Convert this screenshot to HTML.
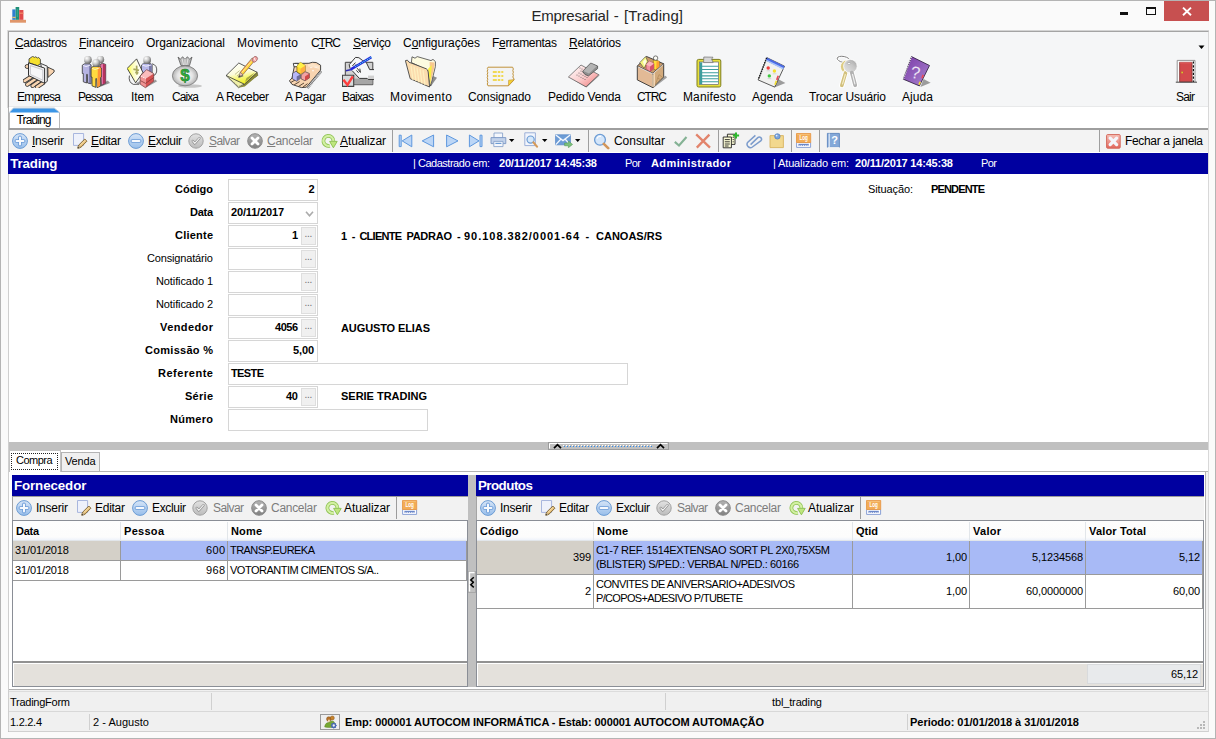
<!DOCTYPE html>
<html lang="pt-BR"><head><meta charset="utf-8"><title>Empresarial - [Trading]</title>
<style>
html,body{margin:0;padding:0}
body{width:1216px;height:739px;position:relative;overflow:hidden;background:#fafafa;font-family:"Liberation Sans",sans-serif;font-size:12px;color:#000}
body div,body span.t,body svg{position:absolute;box-sizing:border-box}
span.t{white-space:pre;display:block}
u{text-decoration:underline;text-underline-offset:0.6px;text-decoration-thickness:1px}

</style></head><body>
<div style="left:0px;top:0px;width:1216px;height:739px;background:#fafafa;border:1px solid #b4b4b4;"></div>
<div style="left:10px;top:7px;width:16px;height:16px;"><svg width="16" height="16" viewBox="0 0 16 16"><rect x="0" y="12.8" width="16" height="2.9" fill="#e0966a"/><rect x="2.3" y="2.4" width="3.3" height="10.4" fill="#2f7fd0"/><rect x="5.6" y="0" width="3.6" height="12.8" fill="#1f8f78"/><rect x="9.2" y="3" width="4.2" height="9.8" fill="#e04a4a"/><rect x="9.2" y="5.6" width="4.2" height="1.2" fill="#f08a6a"/><rect x="2.3" y="9.8" width="3.3" height="1.3" fill="#e8c070"/><rect x="6.8" y="2" width="1" height="8" fill="#3aa890"/></svg></div>
<span class="t " style="top:6.30px;font-size:15px;line-height:19px;color:#262626;letter-spacing:-0.253px;left:531.5px;">Empresarial</span>
<span class="t " style="top:6.30px;font-size:15px;line-height:19px;color:#262626;left:613.8px;">-</span>
<span class="t " style="top:6.30px;font-size:15px;line-height:19px;color:#262626;letter-spacing:0.045px;left:624px;">[Trading]</span>
<div style="left:1164px;top:1px;width:45px;height:20px;background:#c75050;"></div>
<svg style="left:1181px;top:6px" width="12" height="11" viewBox="0 0 12 11"><path d="M2 1.6 L10 9.2 M10 1.6 L2 9.2" stroke="#fff" stroke-width="1.9" fill="none"/></svg>
<div style="left:1146px;top:7px;width:10px;height:8px;border:1px solid #111;border-top-width:2px;"></div>
<div style="left:1120px;top:12px;width:8px;height:3px;background:#111;"></div>
<div style="left:8px;top:31px;width:1201px;height:701px;background:#f0f0f0;border:1px solid #c6c6c6;border-top-color:#a8a8a8;border-left-color:#b0b0b0;border-right-color:#d8d8d8;border-bottom-color:#d0d0d0;"></div>
<div style="left:9px;top:32px;width:1199px;height:75px;background:#f5f6f7;"></div>
<div style="left:8px;top:31px;width:1px;height:76px;background:#a0a0a0;"></div>
<div style="left:7px;top:30px;width:1202px;height:1px;background:#d4d4d4;"></div>
<div style="left:7px;top:30px;width:1px;height:78px;background:#dcdcdc;"></div>
<div style="left:8px;top:31px;width:1200px;height:1px;background:#a4a4a4;"></div>
<span class="t " style="top:34.84px;font-size:12px;line-height:16px;letter-spacing:-0.338px;left:15px;"><u>C</u>adastros</span>
<span class="t " style="top:34.84px;font-size:12px;line-height:16px;letter-spacing:-0.116px;left:79px;"><u>F</u>inanceiro</span>
<span class="t " style="top:34.84px;font-size:12px;line-height:16px;letter-spacing:-0.081px;left:146px;">Organizacional</span>
<span class="t " style="top:34.84px;font-size:12px;line-height:16px;letter-spacing:0.289px;left:237px;">Movimento</span>
<span class="t " style="top:34.84px;font-size:12px;line-height:16px;letter-spacing:-1.120px;left:311px;">C<u>T</u>RC</span>
<span class="t " style="top:34.84px;font-size:12px;line-height:16px;letter-spacing:-0.339px;left:353px;"><u>S</u>erviço</span>
<span class="t " style="top:34.84px;font-size:12px;line-height:16px;letter-spacing:-0.034px;left:403px;">C<u>o</u>nfigurações</span>
<span class="t " style="top:34.84px;font-size:12px;line-height:16px;letter-spacing:-0.306px;left:492px;">F<u>e</u>rramentas</span>
<span class="t " style="top:34.84px;font-size:12px;line-height:16px;letter-spacing:-0.226px;left:569px;"><u>R</u>elatórios</span>
<svg style="left:1198px;top:45px" width="8" height="5"><path d="M0.5 0.5h6l-3 3.5z" fill="#000"/></svg>
<svg width="0" height="0" style="left:0;top:0"><defs>
<radialGradient id="gs" cx="0.35" cy="0.3" r="0.8"><stop offset="0" stop-color="#fff"/><stop offset="0.45" stop-color="#c6c6c6"/><stop offset="1" stop-color="#565656"/></radialGradient>
<radialGradient id="gbag" cx="0.5" cy="0.5" r="0.55"><stop offset="0" stop-color="#fff"/><stop offset="0.55" stop-color="#e4e4e4"/><stop offset="1" stop-color="#a4a4a4"/></radialGradient>
<linearGradient id="gbl" x1="0" y1="0" x2="0" y2="1"><stop offset="0" stop-color="#d6e5f7"/><stop offset="1" stop-color="#98beea"/></linearGradient>
<linearGradient id="ggr" x1="0" y1="0" x2="0" y2="1"><stop offset="0" stop-color="#e2e2e2"/><stop offset="1" stop-color="#bcbcbc"/></linearGradient>
<linearGradient id="gdk" x1="0" y1="0" x2="0" y2="1"><stop offset="0" stop-color="#b4b4b4"/><stop offset="1" stop-color="#808080"/></linearGradient>
<linearGradient id="gpk" x1="0" y1="0" x2="1" y2="1"><stop offset="0" stop-color="#fff"/><stop offset="0.5" stop-color="#fbd0d0"/><stop offset="1" stop-color="#f07878"/></linearGradient>
<linearGradient id="gpu" x1="0" y1="0" x2="1" y2="1"><stop offset="0" stop-color="#7a3aa8"/><stop offset="1" stop-color="#a986cf"/></linearGradient>
<linearGradient id="gye" x1="0" y1="0" x2="1" y2="0"><stop offset="0" stop-color="#ffff30"/><stop offset="0.3" stop-color="#fdfda8"/><stop offset="0.65" stop-color="#fffff0"/><stop offset="1" stop-color="#fffff4"/></linearGradient>
<linearGradient id="gpad" x1="0" y1="0" x2="0.3" y2="1"><stop offset="0" stop-color="#fffffa"/><stop offset="0.55" stop-color="#fcfcdc"/><stop offset="0.8" stop-color="#f6f668"/><stop offset="1" stop-color="#f0f030"/></linearGradient>
<linearGradient id="gred" x1="0" y1="0" x2="0" y2="1"><stop offset="0" stop-color="#f7c4bc"/><stop offset="1" stop-color="#e0665c"/></linearGradient>
<linearGradient id="gkey" x1="0" y1="1" x2="1" y2="0"><stop offset="0" stop-color="#e8e8e8"/><stop offset="0.6" stop-color="#c6c6c6"/><stop offset="1" stop-color="#9e9e9e"/></linearGradient>
</defs></svg><svg style="left:23px;top:56px" width="32" height="32" viewBox="0 0 32 32">
<path d="M24.8 11.2L31.1 14.1V16L25 21.4Z" fill="#f8d4b0" stroke="#333" stroke-width=".9"/>
<rect x="2.2" y="8.6" width="4.4" height="3.8" rx="1.7" fill="#f8d4b0" stroke="#333" stroke-width=".9"/>
<path d="M8.5 20.6L1.8 24.9" stroke="#333" stroke-width="4.3" stroke-linecap="round"/><path d="M8.5 20.6L1.8 24.9" stroke="#f8d4b0" stroke-width="2.7" stroke-linecap="round"/><path d="M12.5 23L4.2 28.6" stroke="#333" stroke-width="4.3" stroke-linecap="round"/><path d="M12.5 23L4.2 28.6" stroke="#f8d4b0" stroke-width="2.7" stroke-linecap="round"/><path d="M16.5 25L9.6 29.8" stroke="#333" stroke-width="4.3" stroke-linecap="round"/><path d="M16.5 25L9.6 29.8" stroke="#f8d4b0" stroke-width="2.7" stroke-linecap="round"/><path d="M20 27L14 31" stroke="#333" stroke-width="4.3" stroke-linecap="round"/><path d="M20 27L14 31" stroke="#f8d4b0" stroke-width="2.7" stroke-linecap="round"/>
<path d="M6 2.9L9.6 .4L11.6 1.4L12.6 .8L14.6 2L15.6 1.4L17.4 3.4V7.8L14.5 9.7L6 6.8Z" fill="#f5e030" stroke="#333" stroke-width=".8"/>
<path d="M17.6 7.4L24.3 10.2V25.3L21.6 27.3Z" fill="#ececec" stroke="#333" stroke-width=".9"/>
<path d="M19.2 9.5L22.4 10.8V25L21.6 26Z" fill="#fafafa"/>
<path d="M5.5 6.8L21.6 12.1V27.3L5.5 19.5Z" fill="#f1f1f3" stroke="#333" stroke-width="1"/>
<path d="M7.4 9.6L19.8 13.8V24.2L7.4 18.4Z" fill="#f6f6f8" stroke="#c4c4c8" stroke-width=".9"/>
</svg><svg style="left:80px;top:56px" width="32" height="32" viewBox="0 0 32 32">
<path d="M18 31.8L30 27L27.8 24.6L24 27Z" fill="#969696"/>
<path d="M19.9 8.6L22.4 7.3L25.7 8.4V27.2L21.4 29.4Z" fill="#e072a4" stroke="#333" stroke-width=".8"/>
<path d="M23 8V28.2L25.4 27V8.6Z" fill="#b6325e"/>
<circle cx="20.4" cy="3.5" r="3.8" fill="url(#gs)"/>
<path d="M2.3 9.2L4.4 7.8H10L11.1 9V27.8L7.6 27L7.4 18.4H6.6V27L3.3 25.8V17.5H2.3Z" fill="#b6b4e2" stroke="#333" stroke-width=".8"/>
<path d="M9.2 8.4H10.8V27.4L9.2 27Z" fill="#7676a6"/>
<path d="M3 9.4L6 10.6L10 9.2" stroke="#f0f0fc" stroke-width=".9" fill="none"/>
<circle cx="7.9" cy="3.7" r="3.9" fill="url(#gs)"/>
<path d="M11.1 12L13 10.4H19.6L21.3 12V21L20.4 21.4V30L17 31.7L16.6 22.6H15.8V31.4L12 29.8V21H11.1Z" fill="#ffda40" stroke="#333" stroke-width=".8"/>
<path d="M17.9 11H19.6L20.9 12.2V21L20 21.4V29.8L17.4 31.2Z" fill="#ff9236"/>
<path d="M12 12.4L15 13.4L19.4 12" stroke="#fff6c8" stroke-width=".9" fill="none"/>
<circle cx="16.2" cy="6.9" r="3.9" fill="url(#gs)"/>
</svg><svg style="left:127px;top:56px" width="32" height="33" viewBox="0 0 32 33">
<path d="M18.4 31.9L30.2 25.2L28.2 23.6L26.7 25.3Z" fill="#9c9c9c"/>
<path d="M9 27L13.2 25V28.2L11 28.6Z" fill="#a4a4a4"/>
<path d="M25 7.8Q30.6 9 29.6 16Q28.6 19.4 26.4 19.6" fill="none" stroke="#333" stroke-width=".8"/>
<path d="M2.4 19.6Q1.2 26.4 6.4 28.4L12 28.2" fill="none" stroke="#333" stroke-width=".8"/>
<path d="M14.5 9L16.4 7.3H23.6L25.2 9V17L14.5 16.4Z" fill="#b8b8ea" stroke="#333" stroke-width=".7"/>
<path d="M22 8H24.8V16.8L22 15.6Z" fill="#7878a8"/>
<path d="M15.4 9.2L19 10.2L24.4 9" stroke="#f4f4fc" stroke-width=".9" fill="none"/>
<circle cx="20.1" cy="3.9" r="3.9" fill="url(#gs)"/>
<path d="M.2 12.4L9.6 2.9L15.9 16.5L8.6 26.8Z" fill="url(#gye)" stroke="#222" stroke-width=".8"/>
<path d="M9.6 9.6L10 18.6M6.4 13.2L12 14.4M8.2 16.4L11.4 16.9" stroke="#a8a85e" stroke-width="1.7" fill="none"/>
<path d="M13.2 20L19.6 13.6L26.7 17.5L18.9 22.4Z" fill="#fbbcbc"/>
<path d="M13.2 20L18.9 22.4L18.4 31.7L13.2 28.2Z" fill="#f09494"/>
<path d="M18.9 22.4L26.7 17.5V25.3L18.4 31.7Z" fill="#d65252"/>
<path d="M13.2 20L19.6 13.6L26.7 17.5V25.3L18.4 31.7L13.2 28.2Z" fill="none" stroke="#5a2a2a" stroke-width=".6"/>
<path d="M13.4 24.6L18.6 27.4L26.6 21.6" stroke="#7a3030" stroke-width=".7" fill="none"/>
<path d="M14 20.4L18.6 22.4" stroke="#fff" stroke-width=".8" stroke-dasharray="1.2 .8"/>
</svg><svg style="left:171px;top:56px" width="32" height="32" viewBox="0 0 32 32">
<ellipse cx="19" cy="30" rx="12" ry="1.8" fill="#c6c6c6"/>
<path d="M7 1L9.5 3.2L11.5 .8L14 3.2L16.5 .8L18.5 3.2L21 1L18.5 9.6H10Z" fill="#b4b4b4" stroke="#5a5a5a" stroke-width=".8"/>
<path d="M11 2.5L12.5 9M14 2.5V9M17 2.5L15.8 9" stroke="#e8e8e8" stroke-width=".9"/>
<ellipse cx="14" cy="19.8" rx="12.6" ry="10" fill="url(#gbag)" stroke="#777" stroke-width=".8"/>
<text x="14" y="25.4" text-anchor="middle" font-family="Liberation Sans,sans-serif" font-weight="bold" font-size="17" fill="#2fae3c" stroke="#1c7a26" stroke-width=".5">$</text>
</svg><svg style="left:226px;top:56px" width="33" height="33" viewBox="0 0 33 33">
<path d="M.1 19.5L12.5 31.7L31.8 19.4L31.1 16.3Z" fill="#f0f0a8" stroke="#333" stroke-width=".7"/>
<path d="M18.4 28.2L31.1 16.3L31.8 19.6L18.8 30.6L12.5 31.7Z" fill="#8a8a3a"/>
<path d="M3 22.4L12.4 30.4L18.4 28.2" stroke="#555" stroke-width=".6" fill="none" stroke-dasharray="1.4 .8"/>
<path d="M.1 19.5L12.8 7L31.1 16.3L18.4 28.2Z" fill="url(#gpad)" stroke="#333" stroke-width=".8"/>
<path d="M20.5 22L29 16.6L24.5 21.4L19 26Z" fill="#8c8c3c" opacity=".75"/>
<path d="M9 18.4L13.6 14.6M11 20L14 17.6" stroke="#a8a870" stroke-width=".7"/>
<path d="M12.4 21.2L17.2 19.6" stroke="#555" stroke-width="1.5" opacity=".8"/>
<path d="M14.2 16.3L26.2 1.9L29 4.2L17 18.6Z" fill="#ffa43c" stroke="#5a4a30" stroke-width=".5"/>
<path d="M15.4 17L27.2 3" stroke="#fff8c0" stroke-width=".8"/><path d="M16 17.7L28 3.6" stroke="#ffea40" stroke-width="1.1"/>
<path d="M14.2 16.3L17 18.6L12.8 20.9Z" fill="#f4c0b0" stroke="#555" stroke-width=".5"/>
<path d="M12.8 20.9L13.5 19.3L14.5 20.1Z" fill="#222"/>
<path d="M25 3.4L27.8 5.6" stroke="#c8c8c8" stroke-width="1.2"/>
<ellipse cx="28.8" cy="3.3" rx="2.3" ry="3.1" transform="rotate(40 28.8 3.3)" fill="#f2a4a4" stroke="#8a5050" stroke-width=".6"/>
<path d="M28 1.6L29.4 4.8" stroke="#fff" stroke-width="1" opacity=".9"/>
</svg><svg style="left:289px;top:56px" width="33" height="33" viewBox="0 0 33 33">
<path d="M18.6 32.2L32.6 15.2" stroke="#555" stroke-width="2" stroke-dasharray=".7 .7"/>
<path d="M6 7.4L19.9 7.3L23.3 6.3L27.2 6.5L31.6 9.2V14.1L17.4 31.2L12.6 31.6L8.2 30.2L3 28.4L.4 24.8L3 22L5 12Z" fill="#f8d4b0" stroke="#333" stroke-width=".9"/>
<path d="M19 8.2L24 7.4L30.6 10V13.6L26 11.4L19 10.6Z" fill="#fce4c8"/>
<path d="M4.3 7.4H9.2L9 10.6L5 10.8Z" fill="#fbfbfb" stroke="#333" stroke-width=".9"/>
<path d="M2 26.4L7 23.4M5.2 28.8L10.6 25.6M9.6 30.4L15 27M13.8 31.2L18.6 27.6" stroke="#4a3a2a" stroke-width=".9"/>
<circle cx="24" cy="14.6" r=".9" fill="#fff" opacity=".8"/><path d="M21 11.6H23.4M25.4 11.2H28.4" stroke="#fff" stroke-width=".8" opacity=".8"/>
<path d="M3.5 17.5L7 15.1L11.3 18.5V22.4L7.7 25.3L3.5 22.9Z" fill="#b6b6f8" stroke="#333" stroke-width=".6"/>
<path d="M7.7 20.6L11.3 18.5V22.4L7.7 25.3Z" fill="#6c6c9a"/>
<path d="M12.1 19L16 15.6L20.4 17.5V21.9L16 24.8L12.1 22.9Z" fill="#f2a2a2" stroke="#333" stroke-width=".6"/>
<path d="M16 20.4L20.4 17.5V21.9L16 24.8Z" fill="#d04a4a"/>
<path d="M7.9 10.2L11.3 6.3L16.2 9.5V15.1L11.6 18L7.9 16Z" fill="#ffda30" stroke="#5a4a10" stroke-width=".6"/>
<path d="M11.6 12.4L16.2 9.5V15.1L11.6 18Z" fill="#ffb040"/>
<path d="M7.9 10.2L11.3 6.3L16.2 9.5L11.6 12.4Z" fill="#fff048"/>
</svg><svg style="left:342px;top:56px" width="33" height="32" viewBox="0 0 33 32">
<path d="M3.3 6.3H30.8V28.7H3.3Z" fill="#d2d2d2" stroke="#444" stroke-width="1"/>
<path d="M11 22.6H30.4V28.3H11Z" fill="#a6a6a6"/>
<path d="M3.8 14.8L9.6 13.6" stroke="#2c2cb4" stroke-width="1.5"/>
<path d="M8.1 12.6L7.2 8.7L13.5 1.4L16.9 1.7L20.3 4.3L24.2 6.3L27.7 13.6H32V21.4L26.2 23.4L25.2 22.4H17.4L10.1 14.6Z" fill="#f6f7f8"/>
<path d="M8.1 12.6L7.2 8.7L13.5 1.4L16.9 1.7L20.3 4.3L24.2 6.3L27.7 13.6H32M32 23.4H26.2L25.2 22.4H17.4L10.1 14.6" fill="none" stroke="#222" stroke-width=".9"/>
<path d="M26 19.6H32V23H26Z" fill="#d0d0d0"/>
<path d="M10.4 10L13.4 6.6M12.6 12L14 8.4M15.2 12.2L18.4 16.4L17.8 12.6M14.4 14.4L16.6 16.8" stroke="#222" stroke-width=".9" fill="none"/>
<path d="M8.8 13.4L29.4 1.2" stroke="#2626dc" stroke-width="2.5"/>
<path d="M13 10.9L29.4 1.2" stroke="#4aeaea" stroke-width="1.1" stroke-dasharray="1 1"/>
<path d="M.4 19.3H11.7V30.4H.4Z" fill="#d6dada" stroke="#444" stroke-width="1.1"/>
<path d="M1.4 23.7L5.5 29L10.8 20.4" stroke="#ff3e3e" stroke-width="2.4" fill="none"/>
</svg><svg style="left:405px;top:56px" width="32" height="32" viewBox="0 0 32 32">
<path d="M25.5 30.8L32 21.8L28 20Z" fill="#8e8e8e"/>
<path d="M6.4 6.5L7 .8L10 2.2L12.2 .6L26 4.6L28 3.4L30.4 5.6V10.5L25.6 30L22 14Z" fill="#fdfbe0" stroke="#444" stroke-width=".8"/>
<path d="M24.6 6L29.4 6.4L29.6 10L25.4 28Z" fill="#f8c890"/>
<path d="M23 13L26.8 9L25.2 29Z" fill="#f8f040"/>
<path d="M.4 4.6L2.4 4.2L4 6.2L21.3 12.8Q23 13.6 23.2 16L24.6 31L5.2 22.7Z" fill="#fbdcae" stroke="#444" stroke-width=".9"/>
<path d="M6 9.5L8 24M9 10.5L11 25.2M12 11.8L14 26.4M15 13L17 27.6M18 14.2L20 28.8" stroke="#fdf0c0" stroke-width="1.2"/>
</svg><svg style="left:486px;top:66px" width="30" height="21" viewBox="0 0 30 21">
<path d="M2 1.2H26.6Q28 3 26.8 4.6Q28 6.2 26.8 7.8Q28 9.4 26.8 11L28 13V14L22.4 19.8H2Q.6 18 1.8 16.4Q.6 14.8 1.8 13.2Q.6 11.6 1.8 10Q.6 8.4 1.8 6.8Q.6 5.2 1.8 3.6Q.8 2.4 2 1.2Z" fill="#f3f3f3" stroke="#c0923a" stroke-width="1"/>
<path d="M22.4 19.8L22.6 14.2L28 13.6Z" fill="#f6d234" stroke="#c0923a" stroke-width=".6"/>
<path d="M6.8 6H18M6.8 10H18M6.8 14H18" stroke="#f0d020" stroke-width="1.6" stroke-dasharray="4 1 2.5 1 2 1"/>
</svg><svg style="left:568px;top:56px" width="32" height="32" viewBox="0 0 32 32">
<path d="M1.2 21.6L18.4 31.4L31.4 19.4V18.4L18 30Z" fill="#8a8a8a"/>
<path d="M.4 21L13 9L30.8 18.7L18 30.8Z" fill="url(#gpk)" stroke="#555" stroke-width=".7"/>
<g fill="#555"><circle cx="9" cy="19" r=".5"/><circle cx="11" cy="20.1" r=".5"/><circle cx="13" cy="21.2" r=".5"/><circle cx="15" cy="22.3" r=".5"/><circle cx="17" cy="23.4" r=".5"/><circle cx="11" cy="17" r=".5"/><circle cx="13" cy="18.1" r=".5"/><circle cx="15" cy="19.2" r=".5"/><circle cx="17" cy="20.3" r=".5"/><circle cx="19" cy="21.4" r=".5"/><circle cx="13" cy="15" r=".5"/><circle cx="15" cy="16.1" r=".5"/><circle cx="12" cy="12" r=".5"/><circle cx="14" cy="13" r=".5"/></g>
<path d="M14.6 15.3L22.7 7L29.6 10V12.6L20.4 20Q16 19 14.6 15.3Z" fill="#8e8e8e" stroke="#444" stroke-width=".7"/>
<path d="M15.4 15L22.9 7.6L28.8 10.2L21 17.6Z" fill="#b4b4b4"/>
</svg><svg style="left:636px;top:55px" width="33" height="34" viewBox="0 0 33 34">
<path d="M17.4 33L31 22.6L29.8 20.8L27.7 21.9Z" fill="#a0a0a0"/>
<path d="M1.3 11.2L10.4 1.4L27.7 8.8L16.9 18.5Z" fill="#c89a6a" stroke="#333" stroke-width=".9"/>
<path d="M3.8 7.5L9.6 1.6L11.8 6.3L8.1 13.4Z" fill="#f6f67e" stroke="#444" stroke-width=".6"/>
<path d="M7 6.5L9.4 4L10.4 7L8.2 11Z" fill="#fdfde0"/>
<path d="M17.2 5.6L19 4.6L23.3 6.3L22.8 11.7L19.9 15.1L17.6 14Z" fill="#ffde3a" stroke="#6a4a10" stroke-width=".5"/>
<path d="M20.6 6.2L23.3 6.3L22.8 11.7L20.2 14.8Z" fill="#ffa030"/>
<circle cx="19.6" cy="3.1" r="2.2" fill="#fbfbf4" stroke="#444" stroke-width=".7"/>
<path d="M10.1 9.5L13.5 6.3L17.9 8.5V13.6L14 16.6L10.1 14.1Z" fill="#f2909e" stroke="#8a3040" stroke-width=".5"/>
<path d="M14 11.6L17.9 8.5V13.6L14 16.6Z" fill="#d4506a"/>
<path d="M10.1 9.5L13.5 6.3L17.9 8.5L14 11.6Z" fill="#f8b4bc"/>
<path d="M1.3 11.2L16.9 18.5V32.7L1.3 24.9Z" fill="#e2ba96" stroke="#333" stroke-width=".9"/>
<path d="M16.9 18.5L27.7 8.8V21.9L16.9 32.7Z" fill="#d2aa7c" stroke="#333" stroke-width=".9"/>
<path d="M17.6 19L19 17.8V30.8L17.6 32Z" fill="#f0d4b4"/>
<path d="M23 19.6L19.4 29.6M23 19.6L26.6 22.4M21.6 23L25 25" stroke="#b08858" stroke-width=".7" fill="none"/>
<path d="M16.9 19.4V32" stroke="#f2d8b8" stroke-width="1.3"/><path d="M1.8 11.7L16.9 18.9L27.3 9.5" stroke="#fff" stroke-width=".9" fill="none" opacity=".85"/>
</svg><svg style="left:696px;top:56px" width="26" height="32" viewBox="0 0 26 32">
<rect x="1" y="3.4" width="23.8" height="27.6" rx="1.6" fill="#e6e03c" stroke="#7e7e1e" stroke-width="1"/>
<rect x="3.4" y="6" width="19.2" height="22.6" fill="#fff" stroke="#666" stroke-width=".7"/>
<path d="M3.8 6.4H6.2V28.2H3.8Z" fill="#3e9e9e"/>
<path d="M3.8 10.2H22.4M3.8 13.5H22.4M3.8 16.7H22.4M3.8 19.9H22.4M3.8 22.8H22.4M3.8 25.8H22.4" stroke="#3e9e9e" stroke-width="1.1"/>
<path d="M7.8 1L17 1.2L15.6 3.2L17.2 6.6H7.6Z" fill="#d6d6d6" stroke="#6e6e6e" stroke-width=".7"/>
</svg><svg style="left:757px;top:56px" width="30" height="33" viewBox="0 0 30 33">
<path d="M17.5 31.4L28.4 27L21 23Z" fill="#9c9c9c"/>
<path d="M9.8 1.6L27.5 10.2L17.7 31.1L1.1 23.9Z" fill="#f1f1ef" stroke="#333" stroke-width=".8"/>
<path d="M9.8 1.6L27.5 10.2L26.2 13L8.6 4.4Z" fill="#4a6ae6"/>
<path d="M9.2 3.4L26.8 12L26.2 13.4L8.6 4.8Z" fill="#a8c4fa"/>
<path d="M9.6 2L1.4 23.6" stroke="#111" stroke-width="1.5" stroke-dasharray="1 1.3"/>
<circle cx="11.2" cy="12" r="1.7" fill="#f03c3c"/><circle cx="17.4" cy="15" r="1.7" fill="#f4de2c"/><circle cx="12.3" cy="19.9" r="1.7" fill="#3cc83c"/>
<path d="M9.6 14.8H13M15.8 17.8H19.4M10.6 22.6H14.2" stroke="#c8c8c8" stroke-width=".7"/>
<path d="M20.4 19.4L22 20L20.6 24.4L19 23.6Z" fill="#e84a5a"/><path d="M18.6 24.4L20.2 25L18.8 29L17.2 28.4Z" fill="#f2de30"/>
</svg><svg style="left:834px;top:55px" width="28" height="33" viewBox="0 0 28 33">
<ellipse cx="9.6" cy="4.5" rx="6.5" ry="3" transform="rotate(12 9.6 4.5)" fill="none" stroke="#fff" stroke-width="2.2"/>
<ellipse cx="9.6" cy="4.5" rx="6.5" ry="3" transform="rotate(12 9.6 4.5)" fill="none" stroke="#7a7a7a" stroke-width=".9"/>
<circle cx="13.1" cy="11.7" r="6.7" fill="#dccb82" stroke="#fff" stroke-width=".8"/>
<path d="M11.6 17.8L7.8 30.4" stroke="#fff" stroke-width="5.4" stroke-linecap="round"/>
<path d="M11.6 17.8L7.8 30.4" stroke="#d2c07c" stroke-width="3.6" stroke-linecap="round"/>
<path d="M11.4 19L8.4 29.4" stroke="#f6eecc" stroke-width="1.1"/>
<path d="M17.8 17.6L21.2 30.2" stroke="#fff" stroke-width="5.6" stroke-linecap="round"/>
<circle cx="16.4" cy="11.2" r="6.8" fill="url(#gkey)" stroke="#fff" stroke-width=".8"/>
<ellipse cx="15" cy="8.4" rx="1.7" ry="1" fill="#fff" stroke="#8a8a8a" stroke-width=".5"/>
<path d="M17.8 17.6L21.2 30.2" stroke="#b2b2b2" stroke-width="3.8" stroke-linecap="round"/>
<path d="M18.4 19L21 29.4" stroke="#f2f2f2" stroke-width="1.1"/>
</svg><svg style="left:902px;top:55px" width="30" height="33" viewBox="0 0 30 33">
<path d="M18.4 32L28.6 27.8L21.6 24Z" fill="#9c9c9c"/>
<path d="M9.5 1.6L27.5 10.5L17.4 30.9L1.3 24.2Z" fill="url(#gpu)" stroke="#2a1a3a" stroke-width=".8"/>
<path d="M9.4 2L1.6 23.8" stroke="#f4f4f4" stroke-width="1.2" stroke-dasharray="1 1.2"/>
<text x="13.6" y="23.4" text-anchor="middle" font-family="Liberation Sans,sans-serif" font-size="17" fill="#ece4f4" transform="rotate(8 13.6 17)">?</text>
<path d="M20.4 19.6L22 20.3L20.8 23.6L19.2 22.9Z" fill="#e84a5a"/><path d="M17.4 26.4L19 27.1L17.9 30L16.3 29.3Z" fill="#f2de30"/>
</svg><svg style="left:1175px;top:59px" width="24" height="25" viewBox="0 0 24 25">
<path d="M2.2 23V1.4H20V23" fill="#fdfdfd" stroke="#8a8a8a" stroke-width=".9"/>
<path d="M4.6 3.3H17.1V23H4.6Z" fill="#d34a4c" stroke="#7a2a2a" stroke-width=".7"/>
<path d="M5 3.8H16.8" stroke="#f07070" stroke-width=".8"/>
<path d="M18.4 2.4V23" stroke="#111" stroke-width="1.2" stroke-dasharray="2.2 1.6"/>
<circle cx="7.1" cy="13.5" r=".9" fill="#f6e23a" stroke="#8a6a10" stroke-width=".3"/>
<path d="M.8 23.2H22" stroke="#555" stroke-width="1.1"/>
</svg>
<span class="t " style="top:88.84px;font-size:12px;line-height:16px;letter-spacing:-0.672px;left:17px;">Empresa</span>
<span class="t " style="top:88.84px;font-size:12px;line-height:16px;letter-spacing:-1.006px;left:78px;">Pessoa</span>
<span class="t " style="top:88.84px;font-size:12px;line-height:16px;letter-spacing:-0.115px;left:131px;">Item</span>
<span class="t " style="top:88.84px;font-size:12px;line-height:16px;letter-spacing:-0.922px;left:172px;">Caixa</span>
<span class="t " style="top:88.84px;font-size:12px;line-height:16px;letter-spacing:-0.381px;left:216px;">A Receber</span>
<span class="t " style="top:88.84px;font-size:12px;line-height:16px;letter-spacing:-0.284px;left:285px;">A Pagar</span>
<span class="t " style="top:88.84px;font-size:12px;line-height:16px;letter-spacing:-0.806px;left:342px;">Baixas</span>
<span class="t " style="top:88.84px;font-size:12px;line-height:16px;letter-spacing:0.414px;left:390px;">Movimento</span>
<span class="t " style="top:88.84px;font-size:12px;line-height:16px;letter-spacing:-0.118px;left:468px;">Consignado</span>
<span class="t " style="top:88.84px;font-size:12px;line-height:16px;letter-spacing:-0.159px;left:548px;">Pedido Venda</span>
<span class="t " style="top:88.84px;font-size:12px;line-height:16px;letter-spacing:-1.109px;left:637px;">CTRC</span>
<span class="t " style="top:88.84px;font-size:12px;line-height:16px;letter-spacing:0.121px;left:683px;">Manifesto</span>
<span class="t " style="top:88.84px;font-size:12px;line-height:16px;letter-spacing:-0.075px;left:752px;">Agenda</span>
<span class="t " style="top:88.84px;font-size:12px;line-height:16px;letter-spacing:-0.148px;left:809px;">Trocar Usuário</span>
<span class="t " style="top:88.84px;font-size:12px;line-height:16px;letter-spacing:0.074px;left:902px;">Ajuda</span>
<span class="t " style="top:88.84px;font-size:12px;line-height:16px;letter-spacing:-0.781px;left:1176px;">Sair</span>
<div style="left:9px;top:106px;width:1199px;height:1px;background:#e8e9ea;"></div>
<div style="left:9px;top:107px;width:1199px;height:21px;background:#fff;"></div>
<div style="left:9px;top:112px;width:51px;height:17px;background:#fff;border:1px solid #b8b8b8;border-bottom:none;border-top:none;"></div>
<svg style="left:8px;top:107px" width="53" height="6" viewBox="0 0 53 6"><path d="M1 6V5.2L5.2 1H46.4L52 5.4V6Z" fill="#fff"/><path d="M1.5 5.4L5.4 1.3H46.2L51.5 5.4Z" fill="#3c96e6"/><path d="M1.5 6V5.2L5.4 1H46.2L51.5 5.2V6" fill="none" stroke="#b8c4d0" stroke-width=".8"/></svg>
<span class="t " style="top:111.84px;font-size:12px;line-height:16px;letter-spacing:-0.875px;left:16.5px;">Trading</span>
<div style="left:9px;top:128px;width:1199px;height:2px;background:#9e9e9e;"></div>
<div style="left:9px;top:130px;width:1199px;height:22px;background:#f3f3f3;"></div>
<div style="left:9px;top:152px;width:1199px;height:1px;background:#fff;"></div>
<svg style="left:11.5px;top:132.8px" width="16" height="16" viewBox="0 0 16 16"><circle cx="8" cy="8" r="7.4" fill="url(#gbl)" stroke="#6c9cd4" stroke-width="1"/><path d="M8 4.3V11.7M4.3 8H11.7" stroke="#6c9cd8" stroke-width="3.6" stroke-linecap="round"/><path d="M8 4.5V11.5M4.5 8H11.5" stroke="#f6f9fd" stroke-width="2" stroke-linecap="round"/></svg><svg style="left:73.0px;top:133.0px" width="16" height="17" viewBox="0 0 16 17"><path d="M.5 .5H10.6V12.4H.5Z" fill="#eef1fb" stroke="#a8b6de" stroke-width="1"/><path d="M4.8 15.2L5.6 12.2L11.8 6L13.9 8.2L7.8 14.4Z" fill="#e8c078" stroke="#6a5020" stroke-width=".8"/><path d="M6.6 12.8L12.2 7.2" stroke="#f8e4b8" stroke-width="1"/><path d="M4.8 15.2L5.6 12.2L7.8 14.4Z" fill="#f4e6d0" stroke="#6a5020" stroke-width=".5"/><path d="M4.8 15.2L5.2 13.8L6.2 14.8Z" fill="#333"/></svg><svg style="left:128.0px;top:132.8px" width="16" height="16" viewBox="0 0 16 16"><circle cx="8" cy="8" r="7.4" fill="url(#gbl)" stroke="#6c9cd4" stroke-width="1"/><path d="M4.3 8H11.7" stroke="#6c9cd8" stroke-width="3.6" stroke-linecap="round"/><path d="M4.5 8H11.5" stroke="#f6f9fd" stroke-width="2" stroke-linecap="round"/></svg><svg style="left:188.3px;top:132.8px" width="16" height="16" viewBox="0 0 16 16"><circle cx="8" cy="8" r="7.2" fill="url(#ggr)" stroke="#a2a2a2" stroke-width="1"/><path d="M4.8 8L6.8 10.4L11.4 5.2" stroke="#8e8e8e" stroke-width="2.4" fill="none" stroke-linecap="round" stroke-linejoin="round"/><path d="M4.8 8L6.8 10.4L11.4 5.2" stroke="#f4f4f4" stroke-width="1.1" fill="none" stroke-linecap="round" stroke-linejoin="round"/></svg><svg style="left:246.5px;top:132.8px" width="16" height="16" viewBox="0 0 16 16"><circle cx="8" cy="8" r="7.3" fill="url(#gdk)" stroke="#8a8a8a" stroke-width="1"/><path d="M5 5L11 11M11 5L5 11" stroke="#fff" stroke-width="2.8" stroke-linecap="round"/></svg><svg style="left:319.5px;top:132.8px" width="18" height="16" viewBox="0 0 18 16"><path d="M13.4 8A5 5 0 1 0 9.8 12.7" fill="none" stroke="#8abf4e" stroke-width="3.7"/><path d="M13.4 8A5 5 0 1 0 9.8 12.7" fill="none" stroke="#d2f0a2" stroke-width="2.2"/><path d="M9.6 8.4H17.2L13.4 14.8Z" fill="#bee67e" stroke="#8abf4e" stroke-width=".9"/></svg><svg style="left:397px;top:133px" width="90" height="16" viewBox="0 0 90 16">
<path d="M2.2 2.2H4.2V13.6H2.2Z" fill="#bcd6f6" stroke="#5e98de" stroke-width="1"/><path d="M14.8 2L5.2 7.9L14.8 13.8Z" fill="#bcd6f6" stroke="#5e98de" stroke-width="1"/>
<path d="M36.6 2L25.2 7.9L36.6 13.8Z" fill="#bcd6f6" stroke="#5e98de" stroke-width="1"/>
<path d="M49.6 2L61 7.9L49.6 13.8Z" fill="#bcd6f6" stroke="#5e98de" stroke-width="1"/>
<path d="M72.4 2L82 7.9L72.4 13.8Z" fill="#bcd6f6" stroke="#5e98de" stroke-width="1"/><path d="M83 2.2H85V13.6H83Z" fill="#bcd6f6" stroke="#5e98de" stroke-width="1"/>
</svg><svg style="left:490px;top:132px" width="17" height="16" viewBox="0 0 17 16"><path d="M4 1H12.6V6H4Z" fill="#f4f7fc" stroke="#8aa4cc" stroke-width=".9"/><path d="M1 5.6H15.8V11.6H1Z" fill="#c2d2ea" stroke="#7a96c4" stroke-width=".9"/><path d="M3.8 9.4H13V14.6H3.8Z" fill="#f4f7fc" stroke="#8aa4cc" stroke-width=".9"/><path d="M5.4 11.4H11.4" stroke="#6c9cd4" stroke-width="1.2"/></svg><svg style="left:509px;top:138.5px" width="6" height="4" viewBox="0 0 6 4"><path d="M0 0h5.4l-2.7 3z" fill="#000"/></svg><svg style="left:524px;top:132px" width="16" height="17" viewBox="0 0 16 17"><path d="M.8 .8H11.4V13.6H.8Z" fill="#f2f5fc" stroke="#9cb0d8" stroke-width="1"/><circle cx="6.6" cy="7.6" r="3.6" fill="#d6e8fa" stroke="#6c9cd4" stroke-width="1.2"/><path d="M9.4 10.4L13 14.6" stroke="#d69a58" stroke-width="2.2" stroke-linecap="round"/></svg><svg style="left:542px;top:138.5px" width="6" height="4" viewBox="0 0 6 4"><path d="M0 0h5.4l-2.7 3z" fill="#000"/></svg><svg style="left:555px;top:134px" width="19" height="14" viewBox="0 0 19 14"><path d="M.6 .8H15.4V10.8H.6Z" fill="#6c9cd6" stroke="#5a8ac8" stroke-width=".8"/><path d="M.8 1L8 6.6L15.2 1M.8 10.6L6 5M15.2 10.6L10 5" stroke="#f4f8fe" stroke-width="1.3" fill="none"/><path d="M9.6 9H13.4V7L17.6 10.4L13.4 13.8V11.8H9.6Z" fill="#7cc07c" stroke="#4c944c" stroke-width=".5"/></svg><svg style="left:575px;top:138.5px" width="6" height="4" viewBox="0 0 6 4"><path d="M0 0h5.4l-2.7 3z" fill="#000"/></svg><svg style="left:593px;top:133px" width="17" height="17" viewBox="0 0 17 17"><circle cx="7" cy="6.8" r="5.4" fill="#d4e6fa" stroke="#6c9cd4" stroke-width="1.3"/><path d="M4 5.6A3.4 3.4 0 0 1 8 3.4" stroke="#fff" stroke-width="1.1" fill="none"/><path d="M10.8 10.8L15.2 15.2" stroke="#d2965a" stroke-width="2.6" stroke-linecap="round"/></svg><svg style="left:672px;top:133px" width="18" height="16" viewBox="0 0 18 16"><path d="M2.8 8.9L7 12.5L14.5 4" stroke="#84b294" stroke-width="2.1" fill="none"/></svg><svg style="left:694px;top:133px" width="18" height="16" viewBox="0 0 18 16"><path d="M2.2 1.4L16 14.7M15.4 1.6L2.8 14.6" stroke="#e2846c" stroke-width="2.3" fill="none"/></svg><svg style="left:722px;top:132px" width="18" height="17" viewBox="0 0 18 17"><path d="M5.4 2.2H13V12.4H5.4Z" fill="#fbfbd6" stroke="#222" stroke-width=".9"/><path d="M1.2 5H9.4V15.8H1.2Z" fill="#fbfbd6" stroke="#222" stroke-width=".9"/><path d="M2.8 7.6H7.8M2.8 9.8H7.8M2.8 12H7.8M2.8 14H6.6M10.6 5.4H11.8M10.6 7.6H11.8M10.6 9.8H11.8" stroke="#222" stroke-width=".9"/><path d="M14 .4V6.6M10.9 3.5H17.1" stroke="#2eb82e" stroke-width="2"/></svg><svg style="left:745px;top:132px" width="18" height="17" viewBox="0 0 18 17"><path d="M5.6 12.6L12.8 5.6A2.2 2.2 0 0 1 16 8.6L7.4 15A3.4 3.4 0 0 1 2.6 10.4L10.4 3.4" fill="none" stroke="#7c9ccc" stroke-width="1.5"/></svg><svg style="left:768px;top:132px" width="17" height="17" viewBox="0 0 17 17"><path d="M2 3.6H15.4V15.6H2Z" fill="#f2d88e" stroke="#d8b460" stroke-width=".9"/><circle cx="9.4" cy="4.4" r="2.7" fill="#7ca4dc" stroke="#4c7cc0" stroke-width=".7"/><circle cx="8.6" cy="3.6" r=".9" fill="#e8f0fc"/></svg><svg style="left:796px;top:133px" width="16" height="16" viewBox="0 0 16 16"><path d="M.6 9.4H14.6V14.4H.6Z" fill="#fdfdff" stroke="#8aa0d4" stroke-width="1"/><path d="M.5 .5H14.7V9.5H.5Z" fill="#f2ac56" stroke="#e8984a" stroke-width=".9"/><path d="M1.4 1.4H13.8" stroke="#f8c680" stroke-width=".8"/><text x="7.7" y="7.2" text-anchor="middle" font-family="Liberation Sans,sans-serif" font-size="6.6" font-weight="bold" textLength="8.4" lengthAdjust="spacingAndGlyphs" fill="#fff">Log</text><path d="M2.4 11.4H12.8" stroke="#6c88c8" stroke-width="1.2"/><path d="M3 12V13M4.8 12V13M6.6 12V13M8.4 12V13M10.2 12V13M12 12V13" stroke="#6c88c8" stroke-width=".9"/></svg><svg style="left:826px;top:132px" width="15" height="17" viewBox="0 0 15 17"><path d="M1.4 1.4H13.4V15.4H1.4Z" fill="#84a8d8" stroke="#5c84bc" stroke-width=".9"/><path d="M3.2 1.6V15.2" stroke="#e8f0fa" stroke-width="1.1"/><path d="M1.6 15.6H13.4" stroke="#f4f4f4" stroke-width="1"/><text x="8.6" y="12" text-anchor="middle" font-family="Liberation Sans,sans-serif" font-size="11" font-weight="bold" fill="#fff">?</text></svg><svg style="left:1106px;top:134px" width="15" height="15" viewBox="0 0 15 15"><rect x=".6" y=".6" width="13.6" height="13.6" rx="1" fill="url(#gred)" stroke="#d4685c" stroke-width="1"/><path d="M4.2 4.2L10.6 10.6M10.6 4.2L4.2 10.6" stroke="#f4f6fb" stroke-width="3.3" stroke-linecap="round"/></svg>
<span class="t " style="top:132.84px;font-size:12px;line-height:16px;letter-spacing:-0.227px;left:32px;"><u>I</u>nserir</span>
<span class="t " style="top:132.84px;font-size:12px;line-height:16px;letter-spacing:-0.272px;left:91px;"><u>E</u>ditar</span>
<span class="t " style="top:132.84px;font-size:12px;line-height:16px;letter-spacing:-0.339px;left:148px;"><u>E</u>xcluir</span>
<span class="t " style="top:132.84px;font-size:12px;line-height:16px;color:#7c7c7c;letter-spacing:-0.606px;left:209px;"><u>S</u>alvar</span>
<span class="t " style="top:132.84px;font-size:12px;line-height:16px;color:#7c7c7c;letter-spacing:-0.290px;left:267px;"><u>C</u>ancelar</span>
<span class="t " style="top:132.84px;font-size:12px;line-height:16px;letter-spacing:-0.088px;left:340px;"><u>A</u>tualizar</span>
<span class="t " style="top:132.84px;font-size:12px;line-height:16px;letter-spacing:-0.045px;left:614px;">Consultar</span>
<span class="t " style="top:132.84px;font-size:12px;line-height:16px;letter-spacing:-0.337px;left:1125px;">Fechar a janela</span>
<div style="left:392px;top:130px;width:1px;height:22px;background:#9e9e9e;"></div>
<div style="left:588px;top:130px;width:1px;height:22px;background:#9e9e9e;"></div>
<div style="left:718px;top:130px;width:1px;height:22px;background:#9e9e9e;"></div>
<div style="left:791px;top:130px;width:1px;height:22px;background:#9e9e9e;"></div>
<div style="left:819px;top:130px;width:1px;height:22px;background:#9e9e9e;"></div>
<div style="left:1099px;top:130px;width:1px;height:22px;background:#9e9e9e;"></div>
<div style="left:8px;top:153px;width:1200px;height:21px;background:#0000a0;"></div>
<span class="t " style="top:154.52px;font-size:13.33px;line-height:17.33px;font-weight:bold;color:#fff;letter-spacing:-0.190px;left:10.3px;">Trading</span>
<span class="t " style="top:155.69px;font-size:11px;line-height:15px;color:#fff;letter-spacing:-0.479px;left:413px;">| Cadastrado em:</span>
<span class="t " style="top:155.69px;font-size:11px;line-height:15px;font-weight:bold;color:#fff;letter-spacing:-0.197px;left:499px;">20/11/2017 14:45:38</span>
<span class="t " style="top:155.69px;font-size:11px;line-height:15px;color:#fff;letter-spacing:-0.562px;left:625px;">Por</span>
<span class="t " style="top:155.69px;font-size:11px;line-height:15px;font-weight:bold;color:#fff;letter-spacing:0.401px;left:651px;">Administrador</span>
<span class="t " style="top:155.69px;font-size:11px;line-height:15px;color:#fff;letter-spacing:-0.139px;left:773px;">| Atualizado em:</span>
<span class="t " style="top:155.69px;font-size:11px;line-height:15px;font-weight:bold;color:#fff;letter-spacing:-0.197px;left:855px;">20/11/2017 14:45:38</span>
<span class="t " style="top:155.69px;font-size:11px;line-height:15px;color:#fff;letter-spacing:-0.562px;left:981px;">Por</span>
<div style="left:8px;top:174px;width:1px;height:557px;background:#cfcfcf;"></div>
<div style="left:9px;top:174px;width:1199px;height:268px;background:#fff;"></div>
<span class="t " style="top:181.69px;font-size:11px;line-height:15px;font-weight:bold;letter-spacing:0.022px;right:1002.98px;">Código</span>
<div style="left:228px;top:179px;width:90px;height:22px;background:#fff;border:1px solid #d6d6d6;"></div>
<span class="t " style="top:204.69px;font-size:11px;line-height:15px;font-weight:bold;letter-spacing:-0.281px;right:1003.28px;">Data</span>
<div style="left:228px;top:202px;width:90px;height:22px;background:#fff;border:1px solid #d6d6d6;"></div>
<span class="t " style="top:227.69px;font-size:11px;line-height:15px;font-weight:bold;letter-spacing:0.219px;right:1002.78px;">Cliente</span>
<div style="left:228px;top:225px;width:90px;height:22px;background:#fff;border:1px solid #d6d6d6;"></div>
<div style="left:301px;top:227px;width:15px;height:18px;background:#f0f0f0;border:1px solid #dedede;"></div>
<span class="t " style="top:226.84px;font-size:10px;line-height:14px;color:#6e6e6e;letter-spacing:-0.372px;left:304.6px;">...</span>
<span class="t " style="top:250.69px;font-size:11px;line-height:15px;letter-spacing:-0.156px;right:1003.16px;">Consignatário</span>
<div style="left:228px;top:248px;width:90px;height:22px;background:#fff;border:1px solid #d6d6d6;"></div>
<div style="left:301px;top:250px;width:15px;height:18px;background:#f0f0f0;border:1px solid #dedede;"></div>
<span class="t " style="top:249.84px;font-size:10px;line-height:14px;color:#6e6e6e;letter-spacing:-0.372px;left:304.6px;">...</span>
<span class="t " style="top:273.69px;font-size:11px;line-height:15px;letter-spacing:-0.099px;right:1003.10px;">Notificado 1</span>
<div style="left:228px;top:271px;width:90px;height:22px;background:#fff;border:1px solid #d6d6d6;"></div>
<div style="left:301px;top:273px;width:15px;height:18px;background:#f0f0f0;border:1px solid #dedede;"></div>
<span class="t " style="top:272.84px;font-size:10px;line-height:14px;color:#6e6e6e;letter-spacing:-0.372px;left:304.6px;">...</span>
<span class="t " style="top:296.69px;font-size:11px;line-height:15px;letter-spacing:-0.099px;right:1003.10px;">Notificado 2</span>
<div style="left:228px;top:294px;width:90px;height:22px;background:#fff;border:1px solid #d6d6d6;"></div>
<div style="left:301px;top:296px;width:15px;height:18px;background:#f0f0f0;border:1px solid #dedede;"></div>
<span class="t " style="top:295.84px;font-size:10px;line-height:14px;color:#6e6e6e;letter-spacing:-0.372px;left:304.6px;">...</span>
<span class="t " style="top:319.69px;font-size:11px;line-height:15px;font-weight:bold;letter-spacing:0.411px;right:1002.59px;">Vendedor</span>
<div style="left:228px;top:317px;width:90px;height:22px;background:#fff;border:1px solid #d6d6d6;"></div>
<div style="left:301px;top:319px;width:15px;height:18px;background:#f0f0f0;border:1px solid #dedede;"></div>
<span class="t " style="top:318.84px;font-size:10px;line-height:14px;color:#6e6e6e;letter-spacing:-0.372px;left:304.6px;">...</span>
<span class="t " style="top:342.69px;font-size:11px;line-height:15px;font-weight:bold;letter-spacing:0.286px;right:1002.71px;">Comissão %</span>
<div style="left:228px;top:340px;width:90px;height:22px;background:#fff;border:1px solid #d6d6d6;"></div>
<span class="t " style="top:365.69px;font-size:11px;line-height:15px;font-weight:bold;letter-spacing:0.531px;right:1002.47px;">Referente</span>
<div style="left:228px;top:363px;width:400px;height:22px;background:#fff;border:1px solid #d6d6d6;"></div>
<span class="t " style="top:388.69px;font-size:11px;line-height:15px;font-weight:bold;letter-spacing:0.270px;right:1002.73px;">Série</span>
<div style="left:228px;top:386px;width:90px;height:22px;background:#fff;border:1px solid #d6d6d6;"></div>
<div style="left:301px;top:388px;width:15px;height:18px;background:#f0f0f0;border:1px solid #dedede;"></div>
<span class="t " style="top:387.84px;font-size:10px;line-height:14px;color:#6e6e6e;letter-spacing:-0.372px;left:304.6px;">...</span>
<span class="t " style="top:411.69px;font-size:11px;line-height:15px;font-weight:bold;letter-spacing:0.287px;right:1002.71px;">Número</span>
<div style="left:228px;top:409px;width:200px;height:22px;background:#fff;border:1px solid #d6d6d6;"></div>
<span class="t " style="top:181.69px;font-size:11px;line-height:15px;font-weight:bold;right:901.30px;">2</span>
<span class="t " style="top:204.69px;font-size:11px;line-height:15px;font-weight:bold;letter-spacing:-0.161px;left:231px;">20/11/2017</span>
<svg style="left:305px;top:210px" width="9" height="8"><path d="M1 1.8l3.5 4l3.5-4" fill="none" stroke="#ababab" stroke-width="1.6"/></svg>
<span class="t " style="top:227.69px;font-size:11px;line-height:15px;font-weight:bold;right:918.00px;">1</span>
<span class="t " style="top:319.69px;font-size:11px;line-height:15px;font-weight:bold;letter-spacing:-0.495px;right:918.49px;">4056</span>
<span class="t " style="top:342.69px;font-size:11px;line-height:15px;font-weight:bold;letter-spacing:-0.141px;right:902.14px;">5,00</span>
<span class="t " style="top:365.69px;font-size:11px;line-height:15px;font-weight:bold;letter-spacing:-0.613px;left:231px;">TESTE</span>
<span class="t " style="top:388.69px;font-size:11px;line-height:15px;font-weight:bold;letter-spacing:-0.250px;right:918.25px;">40</span>
<span class="t " style="top:228.69px;font-size:11px;line-height:15px;font-weight:bold;left:341px;">1</span>
<span class="t " style="top:228.69px;font-size:11px;line-height:15px;font-weight:bold;left:351.8px;">-</span>
<span class="t " style="top:228.69px;font-size:11px;line-height:15px;font-weight:bold;letter-spacing:-0.744px;left:359.4px;">CLIENTE</span>
<span class="t " style="top:228.69px;font-size:11px;line-height:15px;font-weight:bold;letter-spacing:-0.252px;left:406.4px;">PADRAO</span>
<span class="t " style="top:228.69px;font-size:11px;line-height:15px;font-weight:bold;left:457px;">-</span>
<span class="t " style="top:228.69px;font-size:11px;line-height:15px;font-weight:bold;letter-spacing:0.972px;left:464px;">90.108.382/0001-64</span>
<span class="t " style="top:228.69px;font-size:11px;line-height:15px;font-weight:bold;left:585.5px;">-</span>
<span class="t " style="top:228.69px;font-size:11px;line-height:15px;font-weight:bold;left:596px;">CANOAS/RS</span>
<span class="t " style="top:320.69px;font-size:11px;line-height:15px;font-weight:bold;letter-spacing:-0.105px;left:341px;">AUGUSTO ELIAS</span>
<span class="t " style="top:388.69px;font-size:11px;line-height:15px;font-weight:bold;letter-spacing:-0.016px;left:341px;">SERIE TRADING</span>
<span class="t " style="top:181.69px;font-size:11px;line-height:15px;letter-spacing:-0.109px;left:868px;">Situação:</span>
<span class="t " style="top:181.69px;font-size:11px;line-height:15px;font-weight:bold;letter-spacing:-0.844px;left:931px;">PENDENTE</span>
<div style="left:9px;top:442px;width:1199px;height:8px;background:#c0c0c0;"></div>
<div style="left:548px;top:442px;width:121px;height:8px;background:#c0c0c0;border:1px solid #9c9c9c;"></div>
<svg style="left:548px;top:442px" width="121" height="8"><path d="M1.5 6.5V1.5H119.5" fill="none" stroke="#fff" stroke-width="1"/><path d="M6 6.2l3.5-3.5l3.5 3.5M109 6.2l3.5-3.5l3.5 3.5" fill="none" stroke="#000" stroke-width="1.7"/><path d="M15 3.5h90" stroke="#fff" stroke-width="1" stroke-dasharray="1 2"/><path d="M16 4.5h90" stroke="#2a8af0" stroke-width="1" stroke-dasharray="1 2"/></svg>
<div style="left:9px;top:450px;width:1199px;height:240px;background:#fff;"></div>
<div style="left:9px;top:689px;width:1197px;height:1px;background:#b0b0b0;"></div>
<div style="left:1205px;top:471px;width:1px;height:219px;background:#b4b4b4;"></div>
<div style="left:1206px;top:472px;width:2px;height:218px;background:#f2f2f2;"></div>
<div style="left:61px;top:471px;width:1147px;height:1px;background:#b4b4b4;"></div>
<div style="left:9px;top:450px;width:52px;height:22px;background:#fff;border:1px solid #c4c4c4;border-bottom:none;"></div>
<div style="left:11px;top:453px;width:47px;height:17px;border:1px dotted #222;"></div>
<span class="t " style="top:452.69px;font-size:11px;line-height:15px;letter-spacing:-0.525px;left:16px;">Compra</span>
<div style="left:61px;top:452px;width:39px;height:20px;background:#f0f0f0;border:1px solid #b4b4b4;"></div>
<span class="t " style="top:453.99px;font-size:11px;line-height:15px;letter-spacing:-0.176px;left:65px;">Venda</span>
<div style="left:12px;top:475px;width:456px;height:21px;background:#0000a0;"></div>
<span class="t " style="top:476.92px;font-size:13.33px;line-height:17.33px;font-weight:bold;color:#fff;letter-spacing:-0.092px;left:13.9px;">Fornecedor</span>
<div style="left:12px;top:496px;width:456px;height:24px;background:#f2f2f2;"></div>
<div style="left:12px;top:496px;width:1px;height:24px;background:#a4a4a4;"></div>
<div style="left:12px;top:496px;width:456px;height:1px;background:#9c9c9c;"></div>
<svg style="left:15.5px;top:499.8px" width="16" height="16" viewBox="0 0 16 16"><circle cx="8" cy="8" r="7.4" fill="url(#gbl)" stroke="#6c9cd4" stroke-width="1"/><path d="M8 4.3V11.7M4.3 8H11.7" stroke="#6c9cd8" stroke-width="3.6" stroke-linecap="round"/><path d="M8 4.5V11.5M4.5 8H11.5" stroke="#f6f9fd" stroke-width="2" stroke-linecap="round"/></svg><svg style="left:77.0px;top:500.0px" width="16" height="17" viewBox="0 0 16 17"><path d="M.5 .5H10.6V12.4H.5Z" fill="#eef1fb" stroke="#a8b6de" stroke-width="1"/><path d="M4.8 15.2L5.6 12.2L11.8 6L13.9 8.2L7.8 14.4Z" fill="#e8c078" stroke="#6a5020" stroke-width=".8"/><path d="M6.6 12.8L12.2 7.2" stroke="#f8e4b8" stroke-width="1"/><path d="M4.8 15.2L5.6 12.2L7.8 14.4Z" fill="#f4e6d0" stroke="#6a5020" stroke-width=".5"/><path d="M4.8 15.2L5.2 13.8L6.2 14.8Z" fill="#333"/></svg><svg style="left:132.0px;top:499.8px" width="16" height="16" viewBox="0 0 16 16"><circle cx="8" cy="8" r="7.4" fill="url(#gbl)" stroke="#6c9cd4" stroke-width="1"/><path d="M4.3 8H11.7" stroke="#6c9cd8" stroke-width="3.6" stroke-linecap="round"/><path d="M4.5 8H11.5" stroke="#f6f9fd" stroke-width="2" stroke-linecap="round"/></svg><svg style="left:192.3px;top:499.8px" width="16" height="16" viewBox="0 0 16 16"><circle cx="8" cy="8" r="7.2" fill="url(#ggr)" stroke="#a2a2a2" stroke-width="1"/><path d="M4.8 8L6.8 10.4L11.4 5.2" stroke="#8e8e8e" stroke-width="2.4" fill="none" stroke-linecap="round" stroke-linejoin="round"/><path d="M4.8 8L6.8 10.4L11.4 5.2" stroke="#f4f4f4" stroke-width="1.1" fill="none" stroke-linecap="round" stroke-linejoin="round"/></svg><svg style="left:250.5px;top:499.8px" width="16" height="16" viewBox="0 0 16 16"><circle cx="8" cy="8" r="7.3" fill="url(#gdk)" stroke="#8a8a8a" stroke-width="1"/><path d="M5 5L11 11M11 5L5 11" stroke="#fff" stroke-width="2.8" stroke-linecap="round"/></svg><svg style="left:323.5px;top:499.8px" width="18" height="16" viewBox="0 0 18 16"><path d="M13.4 8A5 5 0 1 0 9.8 12.7" fill="none" stroke="#8abf4e" stroke-width="3.7"/><path d="M13.4 8A5 5 0 1 0 9.8 12.7" fill="none" stroke="#d2f0a2" stroke-width="2.2"/><path d="M9.6 8.4H17.2L13.4 14.8Z" fill="#bee67e" stroke="#8abf4e" stroke-width=".9"/></svg><svg style="left:402px;top:500px" width="16" height="16" viewBox="0 0 16 16"><path d="M.6 9.4H14.6V14.4H.6Z" fill="#fdfdff" stroke="#8aa0d4" stroke-width="1"/><path d="M.5 .5H14.7V9.5H.5Z" fill="#f2ac56" stroke="#e8984a" stroke-width=".9"/><path d="M1.4 1.4H13.8" stroke="#f8c680" stroke-width=".8"/><text x="7.7" y="7.2" text-anchor="middle" font-family="Liberation Sans,sans-serif" font-size="6.6" font-weight="bold" textLength="8.4" lengthAdjust="spacingAndGlyphs" fill="#fff">Log</text><path d="M2.4 11.4H12.8" stroke="#6c88c8" stroke-width="1.2"/><path d="M3 12V13M4.8 12V13M6.6 12V13M8.4 12V13M10.2 12V13M12 12V13" stroke="#6c88c8" stroke-width=".9"/></svg>
<span class="t " style="top:500.24px;font-size:12px;line-height:16px;letter-spacing:-0.224px;left:36px;">Inserir</span>
<span class="t " style="top:500.24px;font-size:12px;line-height:16px;letter-spacing:-0.272px;left:95px;">Editar</span>
<span class="t " style="top:500.24px;font-size:12px;line-height:16px;letter-spacing:-0.336px;left:152px;">Excluir</span>
<span class="t " style="top:500.24px;font-size:12px;line-height:16px;color:#7c7c7c;letter-spacing:-0.603px;left:213px;">Salvar</span>
<span class="t " style="top:500.24px;font-size:12px;line-height:16px;color:#7c7c7c;letter-spacing:-0.290px;left:271px;">Cancelar</span>
<span class="t " style="top:500.24px;font-size:12px;line-height:16px;letter-spacing:-0.086px;left:344px;">Atualizar</span>
<div style="left:396px;top:496px;width:1px;height:23px;background:#9c9c9c;"></div>
<div style="left:476px;top:475px;width:728px;height:21px;background:#0000a0;"></div>
<span class="t " style="top:476.92px;font-size:13.33px;line-height:17.33px;font-weight:bold;color:#fff;letter-spacing:-0.500px;left:477.9px;">Produtos</span>
<div style="left:476px;top:496px;width:728px;height:24px;background:#f2f2f2;"></div>
<div style="left:476px;top:496px;width:1px;height:24px;background:#a4a4a4;"></div>
<div style="left:476px;top:496px;width:728px;height:1px;background:#9c9c9c;"></div>
<svg style="left:479.5px;top:499.8px" width="16" height="16" viewBox="0 0 16 16"><circle cx="8" cy="8" r="7.4" fill="url(#gbl)" stroke="#6c9cd4" stroke-width="1"/><path d="M8 4.3V11.7M4.3 8H11.7" stroke="#6c9cd8" stroke-width="3.6" stroke-linecap="round"/><path d="M8 4.5V11.5M4.5 8H11.5" stroke="#f6f9fd" stroke-width="2" stroke-linecap="round"/></svg><svg style="left:541.0px;top:500.0px" width="16" height="17" viewBox="0 0 16 17"><path d="M.5 .5H10.6V12.4H.5Z" fill="#eef1fb" stroke="#a8b6de" stroke-width="1"/><path d="M4.8 15.2L5.6 12.2L11.8 6L13.9 8.2L7.8 14.4Z" fill="#e8c078" stroke="#6a5020" stroke-width=".8"/><path d="M6.6 12.8L12.2 7.2" stroke="#f8e4b8" stroke-width="1"/><path d="M4.8 15.2L5.6 12.2L7.8 14.4Z" fill="#f4e6d0" stroke="#6a5020" stroke-width=".5"/><path d="M4.8 15.2L5.2 13.8L6.2 14.8Z" fill="#333"/></svg><svg style="left:596.0px;top:499.8px" width="16" height="16" viewBox="0 0 16 16"><circle cx="8" cy="8" r="7.4" fill="url(#gbl)" stroke="#6c9cd4" stroke-width="1"/><path d="M4.3 8H11.7" stroke="#6c9cd8" stroke-width="3.6" stroke-linecap="round"/><path d="M4.5 8H11.5" stroke="#f6f9fd" stroke-width="2" stroke-linecap="round"/></svg><svg style="left:656.3px;top:499.8px" width="16" height="16" viewBox="0 0 16 16"><circle cx="8" cy="8" r="7.2" fill="url(#ggr)" stroke="#a2a2a2" stroke-width="1"/><path d="M4.8 8L6.8 10.4L11.4 5.2" stroke="#8e8e8e" stroke-width="2.4" fill="none" stroke-linecap="round" stroke-linejoin="round"/><path d="M4.8 8L6.8 10.4L11.4 5.2" stroke="#f4f4f4" stroke-width="1.1" fill="none" stroke-linecap="round" stroke-linejoin="round"/></svg><svg style="left:714.5px;top:499.8px" width="16" height="16" viewBox="0 0 16 16"><circle cx="8" cy="8" r="7.3" fill="url(#gdk)" stroke="#8a8a8a" stroke-width="1"/><path d="M5 5L11 11M11 5L5 11" stroke="#fff" stroke-width="2.8" stroke-linecap="round"/></svg><svg style="left:787.5px;top:499.8px" width="18" height="16" viewBox="0 0 18 16"><path d="M13.4 8A5 5 0 1 0 9.8 12.7" fill="none" stroke="#8abf4e" stroke-width="3.7"/><path d="M13.4 8A5 5 0 1 0 9.8 12.7" fill="none" stroke="#d2f0a2" stroke-width="2.2"/><path d="M9.6 8.4H17.2L13.4 14.8Z" fill="#bee67e" stroke="#8abf4e" stroke-width=".9"/></svg><svg style="left:866px;top:500px" width="16" height="16" viewBox="0 0 16 16"><path d="M.6 9.4H14.6V14.4H.6Z" fill="#fdfdff" stroke="#8aa0d4" stroke-width="1"/><path d="M.5 .5H14.7V9.5H.5Z" fill="#f2ac56" stroke="#e8984a" stroke-width=".9"/><path d="M1.4 1.4H13.8" stroke="#f8c680" stroke-width=".8"/><text x="7.7" y="7.2" text-anchor="middle" font-family="Liberation Sans,sans-serif" font-size="6.6" font-weight="bold" textLength="8.4" lengthAdjust="spacingAndGlyphs" fill="#fff">Log</text><path d="M2.4 11.4H12.8" stroke="#6c88c8" stroke-width="1.2"/><path d="M3 12V13M4.8 12V13M6.6 12V13M8.4 12V13M10.2 12V13M12 12V13" stroke="#6c88c8" stroke-width=".9"/></svg>
<span class="t " style="top:500.24px;font-size:12px;line-height:16px;letter-spacing:-0.224px;left:500px;">Inserir</span>
<span class="t " style="top:500.24px;font-size:12px;line-height:16px;letter-spacing:-0.272px;left:559px;">Editar</span>
<span class="t " style="top:500.24px;font-size:12px;line-height:16px;letter-spacing:-0.336px;left:616px;">Excluir</span>
<span class="t " style="top:500.24px;font-size:12px;line-height:16px;color:#7c7c7c;letter-spacing:-0.603px;left:677px;">Salvar</span>
<span class="t " style="top:500.24px;font-size:12px;line-height:16px;color:#7c7c7c;letter-spacing:-0.290px;left:735px;">Cancelar</span>
<span class="t " style="top:500.24px;font-size:12px;line-height:16px;letter-spacing:-0.086px;left:808px;">Atualizar</span>
<div style="left:860px;top:496px;width:1px;height:23px;background:#9c9c9c;"></div>
<div style="left:468px;top:475px;width:8px;height:212px;background:#c0c0c0;"></div>
<div style="left:468px;top:571px;width:8px;height:22px;background:#c0c0c0;border:1px solid #a8a8a8;"></div>
<svg style="left:468px;top:571px" width="8" height="22"><path d="M1.5 20.5V1.5H6.5" fill="none" stroke="#fff" stroke-width="1.4"/><path d="M5.8 6.2l-3 2.8l3 2.6M5.8 11l-3 2.8l3 2.6" fill="none" stroke="#000" stroke-width="1.5"/></svg>
<div style="left:12px;top:520px;width:456px;height:167px;background:#fff;border:1px solid #8a8e96;"></div>
<div style="left:13px;top:521px;width:454px;height:20px;background:linear-gradient(#fdfdfd 0%,#fcfcfc 80%,#eaf0fb 100%);"></div>
<div style="left:13px;top:541px;width:107px;height:20px;background:#d4d0c8;"></div>
<div style="left:121px;top:541px;width:345px;height:20px;background:#a8baf6;"></div>
<div style="left:13px;top:560px;width:454px;height:1px;background:#9a9a9a;"></div>
<div style="left:13px;top:580px;width:454px;height:1px;background:#9a9a9a;"></div>
<div style="left:120px;top:541px;width:1px;height:40px;background:#9a9a9a;"></div>
<div style="left:227px;top:541px;width:1px;height:40px;background:#9a9a9a;"></div>
<div style="left:466px;top:541px;width:1px;height:40px;background:#9a9a9a;"></div>
<div style="left:120px;top:522px;width:1px;height:18px;background:#e2e6ea;"></div>
<div style="left:227px;top:522px;width:1px;height:18px;background:#e2e6ea;"></div>
<div style="left:13px;top:540px;width:454px;height:1px;background:#e2e6ea;"></div>
<div style="left:13px;top:661px;width:454px;height:2px;background:#929292;"></div>
<div style="left:13px;top:663px;width:454px;height:23px;background:#fff;"></div>
<div style="left:14px;top:664px;width:453px;height:22px;background:#e4e1dc;"></div>
<span class="t " style="top:523.69px;font-size:11px;line-height:15px;font-weight:bold;letter-spacing:-0.281px;left:16px;">Data</span>
<span class="t " style="top:523.69px;font-size:11px;line-height:15px;font-weight:bold;letter-spacing:0.294px;left:124px;">Pessoa</span>
<span class="t " style="top:523.69px;font-size:11px;line-height:15px;font-weight:bold;letter-spacing:0.146px;left:231px;">Nome</span>
<span class="t " style="top:542.69px;font-size:11px;line-height:15px;letter-spacing:-0.118px;left:15px;">31/01/2018</span>
<span class="t " style="top:562.69px;font-size:11px;line-height:15px;letter-spacing:-0.118px;left:15px;">31/01/2018</span>
<span class="t " style="top:542.69px;font-size:11px;line-height:15px;letter-spacing:0.320px;right:990.68px;">600</span>
<span class="t " style="top:562.69px;font-size:11px;line-height:15px;letter-spacing:0.320px;right:990.68px;">968</span>
<span class="t " style="top:542.69px;font-size:11px;line-height:15px;letter-spacing:-0.542px;left:230px;">TRANSP.EUREKA</span>
<span class="t " style="top:562.69px;font-size:11px;line-height:15px;letter-spacing:-0.498px;left:230px;">VOTORANTIM CIMENTOS S/A..</span>
<div style="left:476px;top:520px;width:728px;height:167px;background:#fff;border:1px solid #8a8e96;"></div>
<div style="left:477px;top:521px;width:726px;height:20px;background:linear-gradient(#fdfdfd 0%,#fcfcfc 80%,#eaf0fb 100%);"></div>
<div style="left:477px;top:541px;width:116px;height:34px;background:#d4d0c8;"></div>
<div style="left:594px;top:541px;width:608px;height:34px;background:#a8baf6;"></div>
<div style="left:477px;top:574px;width:726px;height:1px;background:#9a9a9a;"></div>
<div style="left:477px;top:608px;width:726px;height:1px;background:#9a9a9a;"></div>
<div style="left:593px;top:541px;width:1px;height:68px;background:#9a9a9a;"></div>
<div style="left:852px;top:541px;width:1px;height:68px;background:#9a9a9a;"></div>
<div style="left:969px;top:541px;width:1px;height:68px;background:#9a9a9a;"></div>
<div style="left:1085px;top:541px;width:1px;height:68px;background:#9a9a9a;"></div>
<div style="left:1202px;top:541px;width:1px;height:68px;background:#9a9a9a;"></div>
<div style="left:593px;top:522px;width:1px;height:18px;background:#e2e6ea;"></div>
<div style="left:852px;top:522px;width:1px;height:18px;background:#e2e6ea;"></div>
<div style="left:969px;top:522px;width:1px;height:18px;background:#e2e6ea;"></div>
<div style="left:1085px;top:522px;width:1px;height:18px;background:#e2e6ea;"></div>
<div style="left:477px;top:540px;width:726px;height:1px;background:#e2e6ea;"></div>
<div style="left:477px;top:661px;width:726px;height:2px;background:#929292;"></div>
<div style="left:477px;top:663px;width:726px;height:23px;background:#fff;"></div>
<div style="left:478px;top:664px;width:725px;height:22px;background:#e4e1dc;"></div>
<span class="t " style="top:523.69px;font-size:11px;line-height:15px;font-weight:bold;letter-spacing:0.122px;left:480px;">Código</span>
<span class="t " style="top:523.69px;font-size:11px;line-height:15px;font-weight:bold;letter-spacing:0.146px;left:597px;">Nome</span>
<span class="t " style="top:523.69px;font-size:11px;line-height:15px;font-weight:bold;left:856px;">Qtid</span>
<span class="t " style="top:523.69px;font-size:11px;line-height:15px;font-weight:bold;letter-spacing:0.273px;left:973px;">Valor</span>
<span class="t " style="top:523.69px;font-size:11px;line-height:15px;font-weight:bold;letter-spacing:0.158px;left:1089px;">Valor Total</span>
<span class="t " style="top:549.69px;font-size:11px;line-height:15px;letter-spacing:-0.180px;right:625.18px;">399</span>
<span class="t " style="top:583.69px;font-size:11px;line-height:15px;right:625.00px;">2</span>
<span class="t " style="top:542.69px;font-size:11px;line-height:15px;letter-spacing:-0.360px;left:596px;">C1-7 REF. 1514EXTENSAO SORT PL 2X0,75X5M</span>
<span class="t " style="top:556.69px;font-size:11px;line-height:15px;letter-spacing:-0.401px;left:596px;">(BLISTER) S/PED.: VERBAL N/PED.: 60166</span>
<span class="t " style="top:576.69px;font-size:11px;line-height:15px;letter-spacing:-0.512px;left:596px;">CONVITES DE ANIVERSARIO+ADESIVOS</span>
<span class="t " style="top:590.69px;font-size:11px;line-height:15px;letter-spacing:-0.665px;left:596px;">P/COPOS+ADESIVO P/TUBETE</span>
<span class="t " style="top:549.69px;font-size:11px;line-height:15px;letter-spacing:-0.141px;right:249.14px;">1,00</span>
<span class="t " style="top:583.69px;font-size:11px;line-height:15px;letter-spacing:-0.141px;right:249.14px;">1,00</span>
<span class="t " style="top:549.69px;font-size:11px;line-height:15px;letter-spacing:-0.125px;right:133.12px;">5,1234568</span>
<span class="t " style="top:583.69px;font-size:11px;line-height:15px;letter-spacing:-0.125px;right:133.12px;">60,0000000</span>
<span class="t " style="top:549.69px;font-size:11px;line-height:15px;letter-spacing:-0.141px;right:16.14px;">5,12</span>
<span class="t " style="top:583.69px;font-size:11px;line-height:15px;letter-spacing:-0.133px;right:16.13px;">60,00</span>
<div style="left:1087px;top:664px;width:114px;height:20px;background:#e8eaec;border:1px solid #d8dadc;"></div>
<span class="t " style="top:666.69px;font-size:11px;line-height:15px;letter-spacing:-0.133px;right:18.13px;">65,12</span>
<div style="left:9px;top:690px;width:1199px;height:22px;background:#f0f0f0;"></div>
<div style="left:9px;top:711px;width:1199px;height:1px;background:#d8d8d8;"></div>
<div style="left:9px;top:712px;width:1199px;height:19px;background:#f0f0f0;"></div>
<div style="left:9px;top:691px;width:1199px;height:1px;background:#dcdcdc;"></div>
<span class="t " style="top:694.69px;font-size:11px;line-height:15px;letter-spacing:-0.256px;left:10px;">TradingForm</span>
<span class="t " style="top:694.69px;font-size:11px;line-height:15px;letter-spacing:-0.138px;left:772px;">tbl_trading</span>
<div style="left:211px;top:693px;width:1px;height:17px;background:#d0d0d0;"></div>
<div style="left:665px;top:693px;width:1px;height:17px;background:#d0d0d0;"></div>
<span class="t " style="top:714.69px;font-size:11px;line-height:15px;letter-spacing:-0.273px;left:10px;">1.2.2.4</span>
<span class="t " style="top:714.69px;font-size:11px;line-height:15px;letter-spacing:0.034px;left:93px;">2 - Augusto</span>
<div style="left:89px;top:714px;width:1px;height:16px;background:#d0d0d0;"></div>
<div style="left:907px;top:714px;width:1px;height:16px;background:#d0d0d0;"></div>
<div style="left:320px;top:714px;width:20px;height:16px;background:#efefef;border:1px solid #9a9a9a;"></div>
<span class="t " style="top:714.69px;font-size:11px;line-height:15px;font-weight:bold;letter-spacing:-0.075px;left:345px;">Emp: 000001 AUTOCOM INFORMÁTICA - Estab: 000001 AUTOCOM AUTOMAÇÃO</span>
<span class="t " style="top:714.69px;font-size:11px;line-height:15px;font-weight:bold;letter-spacing:-0.033px;left:910px;">Periodo: 01/01/2018 à 31/01/2018</span>
<svg style="left:1196px;top:720px" width="10" height="10"><g fill="#b8b8b8"><rect x="7" y="1" width="2" height="2"/><rect x="4" y="4" width="2" height="2"/><rect x="7" y="4" width="2" height="2"/><rect x="1" y="7" width="2" height="2"/><rect x="4" y="7" width="2" height="2"/><rect x="7" y="7" width="2" height="2"/></g></svg>
<svg style="left:322.5px;top:715px" width="15" height="14" viewBox="0 0 17 16"><circle cx="6.6" cy="4.6" r="2.7" fill="#b87228" stroke="#7a4a14" stroke-width=".5"/><circle cx="10.6" cy="3.4" r="2.3" fill="#c8842c" stroke="#7a4a14" stroke-width=".5"/><path d="M5.6 5.4H7.8V8.8H5.6Z" fill="#f0d8b0"/><path d="M1.8 13.6Q2.4 8.6 6.8 8.6Q9 5.6 12.2 7.4Q14.4 9.6 13 13.6Q7 15 1.8 13.6Z" fill="#76a832" stroke="#527a1c" stroke-width=".5"/><circle cx="12.2" cy="12" r="2.9" fill="#4a6ab4"/><path d="M12.2 8.6V15.4M8.8 12H15.6M9.8 9.6L14.6 14.4M14.6 9.6L9.8 14.4" stroke="#4a6ab4" stroke-width="1.2"/><circle cx="12.2" cy="12" r="1.3" fill="#f0f0f0"/></svg>
</body></html>
